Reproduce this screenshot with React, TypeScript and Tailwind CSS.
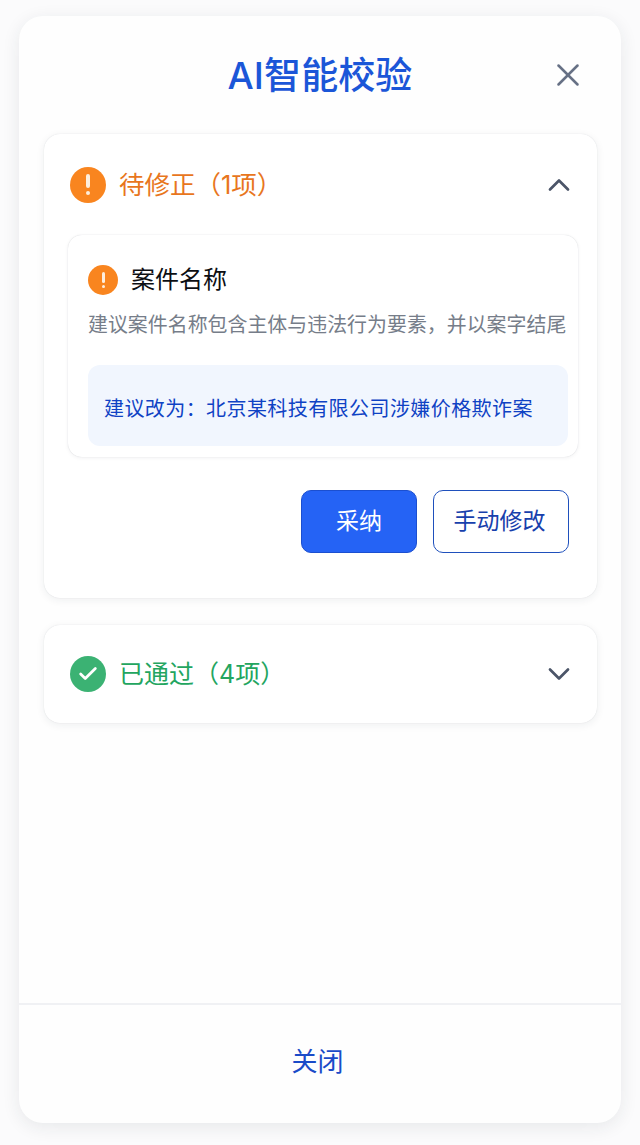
import { Check, ChevronDown, ChevronUp, X } from "lucide-react";

const font = "font-['Inter','Noto_Sans_CJK_SC',sans-serif]";

function AlertDot({ size }: { size: "lg" | "sm" }) {
  return (
    <span
      className={`flex shrink-0 flex-col items-center justify-center rounded-full bg-[#f9851f] ${
        size === "lg" ? "h-9 w-9 gap-[3px]" : "h-[30px] w-[30px] gap-[2px]"
      }`}
    >
      <span className={`rounded-full bg-[#fdeedd] ${size === "lg" ? "h-[14px] w-[3.5px]" : "h-[11px] w-[3px]"}`} />
      <span className={`rounded-full bg-[#fdeedd] ${size === "lg" ? "h-[4px] w-[4px]" : "h-[3px] w-[3px]"}`} />
    </span>
  );
}

export default function App() {
  return (
    <div className={`${font} h-[1145px] overflow-hidden bg-[#fbfbfc] px-[19px] pt-4`}>
      <div className="flex h-[1107px] flex-col rounded-[24px] bg-[#fefefe] shadow-[0_4px_18px_rgba(30,41,59,0.09)]">
        <header className="relative flex h-[118px] shrink-0 items-center justify-center">
          <h1 className="text-[37px] leading-none font-medium tracking-[0.1px] text-[#1b56d8]">AI智能校验</h1>
          <button type="button" className="absolute top-[40px] right-[34px] text-[#667085]">
            <X className="h-[38px] w-[38px]" strokeWidth={1.6} />
          </button>
        </header>

        <main className="flex flex-1 flex-col gap-[27px] px-[25px]">
          <section className="h-[464px] w-[553px] rounded-[16px] bg-white pr-[20px] pl-[24px] shadow-[0_0_1px_rgba(30,41,59,0.16),0_2px_8px_rgba(30,41,59,0.07)]">
            <div className="flex h-[101px] items-center justify-between">
              <div className="flex items-center gap-[13px] pl-[2px]">
                <AlertDot size="lg" />
                <span className="text-[25.5px] leading-none text-[#e8761d]">待修正（1项）</span>
              </div>
              <ChevronUp className="h-[36px] w-[36px] text-[#4b5568]" strokeWidth={1.8} />
            </div>

            <div className="h-[222px] w-[510px] rounded-[14px] bg-white pt-[30px] pr-[10px] pl-[20px] shadow-[0_0_1px_rgba(30,41,59,0.2),0_1px_4px_rgba(30,41,59,0.06)]">
              <div className="flex items-center gap-[13px]">
                <AlertDot size="sm" />
                <span className="text-[24px] leading-[30px] font-normal text-[#0c0e12]">案件名称</span>
              </div>
              <p className="mt-[15px] text-[19.9px] leading-[30px] tracking-[0.04px] whitespace-nowrap text-[#767d89]">
                建议案件名称包含主体与违法行为要素，并以案字结尾
              </p>
              <div className="mt-[25px] flex h-[81px] items-center rounded-[12px] bg-[#f1f6fe] pt-[6px] pl-[16px]">
                <span className="text-[20px] leading-none tracking-[0.42px] whitespace-nowrap text-[#0f42c4]">
                  建议改为：北京某科技有限公司涉嫌价格欺诈案
                </span>
              </div>
            </div>

            <div className="mt-[33px] mr-[8px] flex justify-end gap-[16px]">
              <button
                type="button"
                className="h-[63px] w-[116px] rounded-[10px] border border-[#1b4fd0] bg-[#2563f5] text-[23px] text-white"
              >
                采纳
              </button>
              <button
                type="button"
                className="h-[63px] w-[136px] rounded-[10px] border-[1.5px] border-[#1f50bc] bg-white pr-[3px] text-[23px] text-[#1740ac]"
              >
                手动修改
              </button>
            </div>
          </section>

          <section className="flex h-[98px] w-[553px] items-center justify-between rounded-[16px] bg-white pr-[20px] pl-[26px] shadow-[0_0_1px_rgba(30,41,59,0.16),0_2px_8px_rgba(30,41,59,0.07)]">
            <div className="flex items-center gap-[13px]">
              <span className="flex h-9 w-9 items-center justify-center rounded-full bg-[#3bb273]">
                <Check className="h-[22px] w-[22px] text-white" strokeWidth={3} />
              </span>
              <span className="text-[25px] leading-none text-[#23a55f]">已通过（4项）</span>
            </div>
            <ChevronDown className="h-[36px] w-[36px] text-[#4b5568]" strokeWidth={1.8} />
          </section>
        </main>

        <footer className="flex h-[120px] shrink-0 items-center justify-center border-t-2 border-[#f0f1f4] pr-[5px] pb-[4px]">
          <button type="button" className="text-[26px] leading-none text-[#1a4bc8]">
            关闭
          </button>
        </footer>
      </div>
    </div>
  );
}
